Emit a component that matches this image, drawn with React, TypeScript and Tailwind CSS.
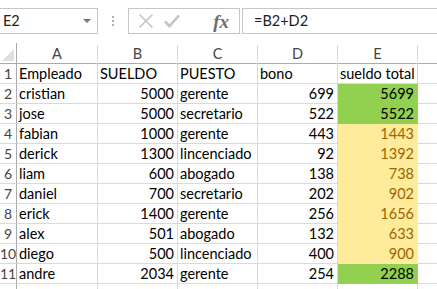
import React from "react";

const rows = [
  ["Empleado", "SUELDO", "PUESTO", "bono", "sueldo total"],
  ["cristian", "5000", "gerente", "699", "5699"],
  ["jose", "5000", "secretario", "522", "5522"],
  ["fabian", "1000", "gerente", "443", "1443"],
  ["derick", "1300", "lincenciado", "92", "1392"],
  ["liam", "600", "abogado", "138", "738"],
  ["daniel", "700", "secretario", "202", "902"],
  ["erick", "1400", "gerente", "256", "1656"],
  ["alex", "501", "abogado", "132", "633"],
  ["diego", "500", "lincenciado", "400", "900"],
  ["andre", "2034", "gerente", "254", "2288"],
];

const greenRows = [1, 2, 10];
const cols = ["A", "B", "C", "D", "E"];
const gridCols = "grid grid-cols-[17px_81px_80px_80px_80px_80px_1fr]";

function Toolbar() {
  return (
    <div className="h-[43px] flex items-start pt-[8px] bg-white">
      <div className="w-[98px] h-[26px] border border-l-0 border-[#c6c6c6] flex items-center justify-between pl-[3px] pr-[6px] text-[#222]">
        <span>E2</span>
        <svg width="8" height="5" viewBox="0 0 8 5">
          <path d="M0 0 L8 0 L4 4 Z" fill="#777" />
        </svg>
      </div>
      <div className="w-[30px] h-[26px] flex flex-col items-center justify-center gap-[2px]">
        <span className="w-[2px] h-[2px] bg-[#b0b0b0]" />
        <span className="w-[2px] h-[2px] bg-[#b0b0b0]" />
        <span className="w-[2px] h-[2px] bg-[#b0b0b0]" />
      </div>
      <div className="w-[112px] h-[26px] border border-[#c6c6c6] flex items-center pl-[9px] pr-[10px]">
        <svg width="16" height="16" viewBox="0 0 16 16">
          <path d="M1.5 1.5 L14.5 14.5 M14.5 1.5 L1.5 14.5" stroke="#c4c4c4" strokeWidth="1.6" />
        </svg>
        <svg width="16" height="14" viewBox="0 0 16 14" className="ml-[10px]">
          <path d="M1 7.5 L5.5 12 L15 1.5" stroke="#c4c4c4" strokeWidth="2.6" fill="none" />
        </svg>
        <span className="ml-auto text-[19px] leading-none italic font-bold text-[#6e6e6e] font-['Liberation_Serif',serif]">
          fx
        </span>
      </div>
      <div className="flex-1 ml-[2px] h-[26px] border border-r-0 border-[#c6c6c6] flex items-center pl-[11px] text-[#222]">
        =B2+D2
      </div>
    </div>
  );
}

export default function App() {
  return (
    <div className="w-[437px] h-[289px] overflow-hidden bg-white font-['Lato',sans-serif] text-[14.5px]">
      <Toolbar />
      <div className={gridCols}>
        <div className="h-[21px] border-r border-b border-[#ababab] relative">
          <svg width="12" height="12" viewBox="0 0 12 12" className="absolute right-[2px] bottom-[2px]">
            <path d="M12 0 L12 12 L0 12 Z" fill="#dfdfdf" />
          </svg>
        </div>
        {cols.map((c) => (
          <div
            key={c}
            className="h-[21px] border-b border-[#ababab] flex items-center justify-center text-[#444] pt-[1px]"
          >
            <div className="w-full h-full flex items-center justify-center border-r border-[#dadada] mt-[1px]">
              {c}
            </div>
          </div>
        ))}
        <div className="h-[21px] border-b border-[#ababab]" />
        {rows.map((r, i) => {
          const green = greenRows.includes(i);
          const yellow = i > 0 && !green;
          return (
            <React.Fragment key={i}>
              <div className="h-[20px] border-r border-b border-[#ababab] border-b-[#dadada] flex items-center justify-center text-[#444] text-[14px]">
                {i + 1}
              </div>
              {r.map((v, j) => {
                const num = i > 0 && (j === 1 || j === 3 || j === 4);
                let fill = "border-[#dadada] text-black";
                if (j === 4 && green) fill = "bg-[#92d050] border-[#92d050] border-b-[#92d050] text-black";
                if (j === 4 && yellow) fill = "bg-[#ffeb9c] border-[#ffeb9c] text-[#9c6500]";
                return (
                  <div
                    key={j}
                    className={`h-[20px] border-r border-b flex items-center whitespace-nowrap overflow-visible ${fill} ${
                      num ? "justify-end pr-[3px]" : "pl-[2px]"
                    }`}
                  >
                    {v}
                  </div>
                );
              })}
              <div className="h-[20px] border-b border-[#dadada]" />
            </React.Fragment>
          );
        })}
        {/* row 12, only its top edge is in view */}
        <div className="h-[20px] border-r border-[#ababab]" />
        {cols.map((c) => (
          <div key={c} className="h-[20px] border-r border-[#dadada]" />
        ))}
        <div />
      </div>
    </div>
  );
}
